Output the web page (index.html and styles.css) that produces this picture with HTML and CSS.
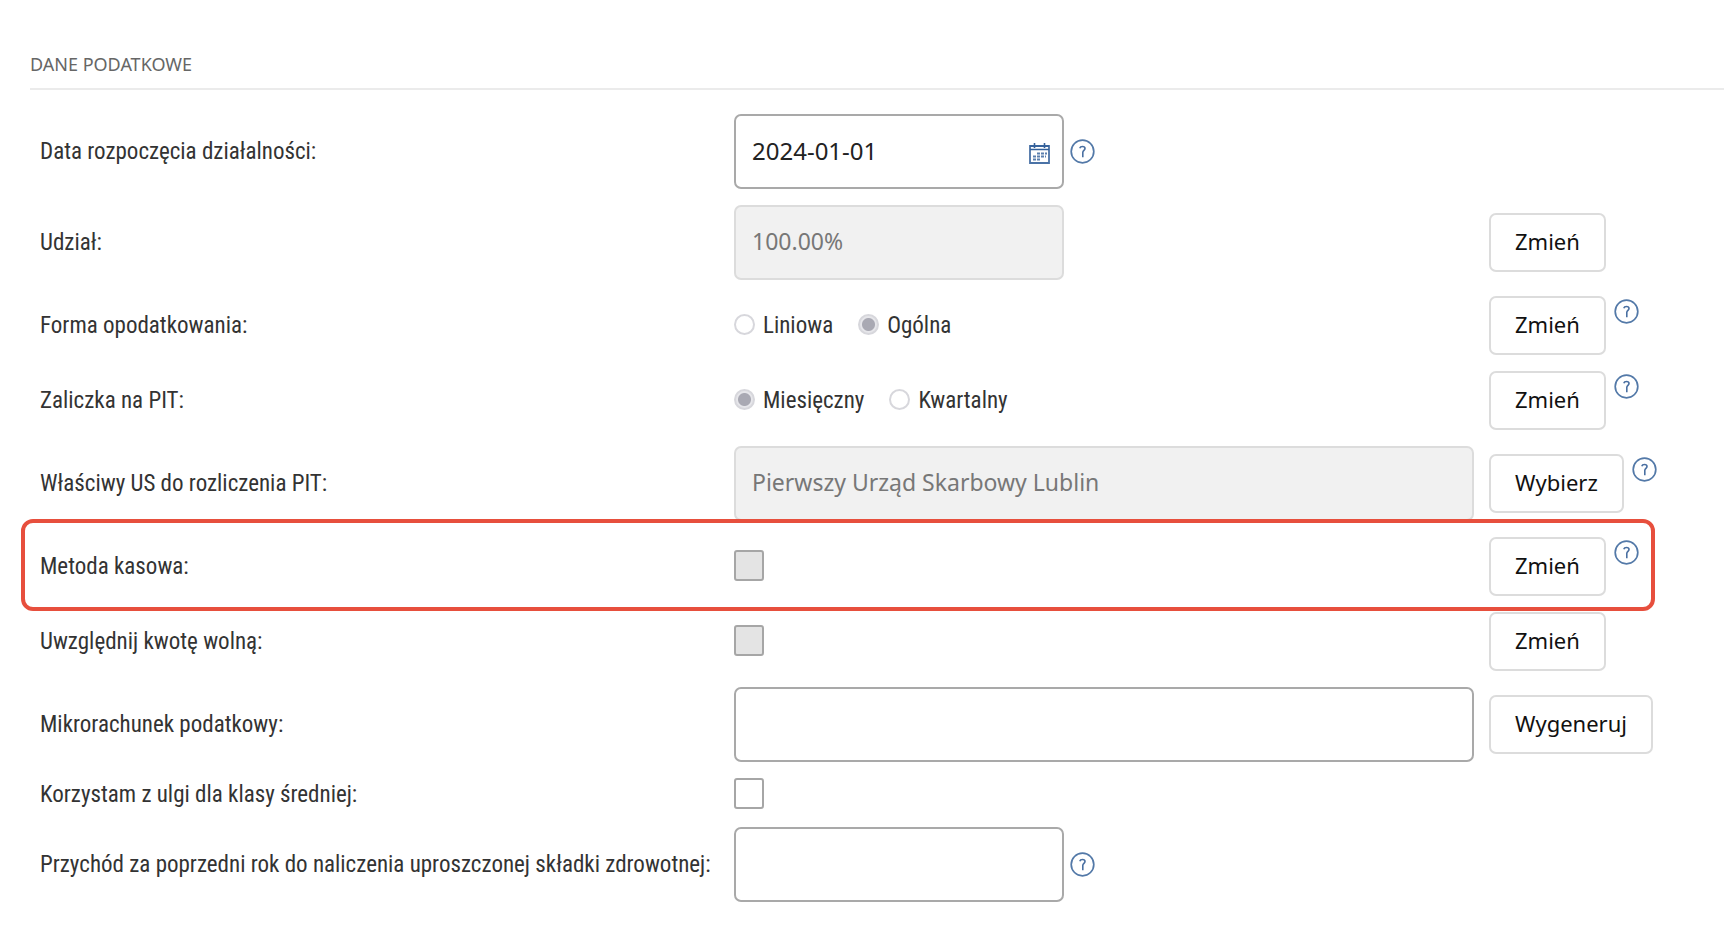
FILE: index.html
```html
<!DOCTYPE html>
<html lang="pl">
<head>
<meta charset="utf-8">
<title>Dane podatkowe</title>
<link rel="stylesheet" href="styles.css">
</head>
<body>
<svg class="sprite" aria-hidden="true">
  <symbol id="help" viewBox="0 0 25 25">
    <circle cx="12.5" cy="12.5" r="11.3" fill="none" stroke="#5379a8" stroke-width="1.7"/>
    <path d="M9.800 9.200c.3-1.200 1.300-1.700 2.700-1.700 1.600 0 2.500.7 2.500 2 0 1.800-2.200 2-2.200 4v4.800" fill="none" stroke="#4a70a2" stroke-width="1.600"/>
  </symbol>
  <symbol id="calendar" viewBox="0 0 21 21">
    <path d="M1 3h19v17H1z" fill="none" stroke="#4a72a6" stroke-width="1.800"/>
    <path d="M1 3h19M1 6.500h19" stroke="#33609a" stroke-width="1.500"/>
    <path d="M5.500 0v5M15.500 0v5" stroke="#33609a" stroke-width="1.600"/>
    <path d="M8 10.500h10M4 13.500h13M4 16.500h8" stroke="#5a7fae" stroke-width="2" stroke-dasharray="3 1"/>
  </symbol>
</svg>
<main class="panel">
  <h1 class="panel-title">Dane podatkowe</h1>
  <form class="form">
    <div class="row">
      <label class="label" for="start">Data rozpoczęcia działalności:</label>
      <div class="field">
        <div class="input input-short date">
          <input class="date-text" id="start" type="text" value="2024-01-01">
          <button class="icon-button date-button" type="button" aria-label="Kalendarz"><svg class="calendar"><use href="#calendar"/></svg></button>
        </div>
        <button class="icon-button" type="button" aria-label="Pomoc"><svg class="help"><use href="#help"/></svg></button>
      </div>
    </div>
    <div class="row">
      <label class="label" for="share">Udział:</label>
      <div class="field"><input class="input input-short" id="share" type="text" value="100.00%" disabled></div>
      <div class="actions"><button class="button" type="button">Zmień</button></div>
    </div>
    <div class="row" role="radiogroup" aria-labelledby="tax-form">
      <span class="label" id="tax-form">Forma opodatkowania:</span>
      <div class="field options">
        <label class="option"><input class="radio" type="radio" name="form" disabled>Liniowa</label>
        <label class="option"><input class="radio" type="radio" name="form" checked disabled>Ogólna</label>
      </div>
      <div class="actions"><button class="button" type="button">Zmień</button><button class="icon-button" type="button" aria-label="Pomoc"><svg class="help"><use href="#help"/></svg></button></div>
    </div>
    <div class="row" role="radiogroup" aria-labelledby="advance">
      <span class="label" id="advance">Zaliczka na PIT:</span>
      <div class="field options">
        <label class="option"><input class="radio" type="radio" name="advance" checked disabled>Miesięczny</label>
        <label class="option"><input class="radio" type="radio" name="advance" disabled>Kwartalny</label>
      </div>
      <div class="actions"><button class="button" type="button">Zmień</button><button class="icon-button" type="button" aria-label="Pomoc"><svg class="help"><use href="#help"/></svg></button></div>
    </div>
    <div class="row">
      <label class="label" for="office">Właściwy US do rozliczenia PIT:</label>
      <div class="field"><input class="input" id="office" type="text" value="Pierwszy Urząd Skarbowy Lublin" disabled></div>
      <div class="actions"><button class="button" type="button">Wybierz</button><button class="icon-button" type="button" aria-label="Pomoc"><svg class="help"><use href="#help"/></svg></button></div>
    </div>
    <div class="row row-highlight">
      <label class="label" for="cash">Metoda kasowa:</label>
      <div class="field"><input class="checkbox" id="cash" type="checkbox" disabled></div>
      <div class="actions"><button class="button" type="button">Zmień</button><button class="icon-button" type="button" aria-label="Pomoc"><svg class="help"><use href="#help"/></svg></button></div>
    </div>
    <div class="row">
      <label class="label" for="allowance">Uwzględnij kwotę wolną:</label>
      <div class="field"><input class="checkbox" id="allowance" type="checkbox" disabled></div>
      <div class="actions"><button class="button" type="button">Zmień</button></div>
    </div>
    <div class="row">
      <label class="label" for="account">Mikrorachunek podatkowy:</label>
      <div class="field"><input class="input" id="account" type="text"></div>
      <div class="actions"><button class="button" type="button">Wygeneruj</button></div>
    </div>
    <div class="row">
      <label class="label" for="relief">Korzystam z ulgi dla klasy średniej:</label>
      <div class="field"><input class="checkbox" id="relief" type="checkbox"></div>
    </div>
    <div class="row">
      <label class="label" for="income">Przychód za poprzedni rok do naliczenia uproszczonej składki zdrowotnej:</label>
      <div class="field"><input class="input input-short" id="income" type="text"><button class="icon-button" type="button" aria-label="Pomoc"><svg class="help"><use href="#help"/></svg></button></div>
    </div>
  </form>
</main>
</body>
</html>
```
FILE: styles.css
```css
* {
  box-sizing: border-box;
}

body {
  margin: 0;
  background: #fff;
  color: #333;
  font-family: "Roboto Condensed", Roboto, sans-serif;
  font-size: 23px;
  line-height: 32px;
}

.sprite {
  position: absolute;
  width: 0;
  height: 0;
}

.panel {
  padding: 52px 0 16px 30px;
}

.panel-title {
  margin: 0;
  padding-bottom: 12px;
  border-bottom: 2px solid #ebebeb;
  color: #666;
  font: 400 18px/24px "Noto Sans", sans-serif;
  text-transform: uppercase;
}

.form {
  padding: 16px 0 0 10px;
}

.row {
  position: relative;
  display: grid;
  grid-template-columns: 694fr 755fr 235fr;
  align-items: center;
  min-height: 49px;
  padding: 8px 0;
}

.row-highlight::after {
  content: "";
  position: absolute;
  inset: -10px 69px -7px -19px;
  border: 4px solid #e74f3d;
  border-radius: 12px;
  pointer-events: none;
}

.field {
  display: flex;
  align-items: center;
  gap: 6px;
  padding-right: 15px;
}

.input {
  flex: 1;
  min-width: 0;
  height: 75px;
  padding: 0 16px 3px;
  border: 2px solid #a9a9a9;
  border-radius: 7px;
  background: #fff;
  color: #222;
  font: 23px "Noto Sans", sans-serif;
}

.input:disabled {
  border-color: #dcdcdc;
  background: #f1f1f1;
  color: #777;
}

.input-short {
  flex: 0 1 330px;
}

.date {
  display: flex;
  align-items: center;
  padding-right: 12px;
}

.date-text {
  flex: 1;
  min-width: 0;
  padding: 0;
  border: 0;
  outline: 0;
  background: none;
  color: #222;
  font: 24px "Noto Sans", sans-serif;
}

.icon-button {
  display: flex;
  padding: 0;
  border: 0;
  background: none;
  cursor: pointer;
}

.date-button {
  padding-top: 6px;
}

.help {
  width: 25px;
  height: 25px;
}

.calendar {
  width: 21px;
  height: 21px;
}

.options {
  gap: 25px;
}

.option {
  display: flex;
  align-items: center;
  gap: 8px;
}

.radio {
  appearance: none;
  width: 21px;
  height: 21px;
  margin: 0 0 2px;
  border: 2px solid #d7d7dc;
  border-radius: 50%;
  background: #fff;
}

.radio:checked {
  background: radial-gradient(circle, #a9a9b3 6px, #e6e6ea 7px);
}

.checkbox {
  appearance: none;
  width: 30px;
  height: 31px;
  margin: 0 0 2px;
  border: 2px solid #a6a6a6;
  border-radius: 3px;
  background: #fff;
}

.checkbox:disabled {
  background: #e4e4e4;
}

.actions {
  display: flex;
  align-items: flex-start;
  gap: 8px;
}

.actions .icon-button {
  padding-top: 3px;
}

.button {
  height: 59px;
  padding: 0 24px 4px;
  border: 2px solid #dcdcdc;
  border-radius: 7px;
  background: #fff;
  color: #111;
  font: 22px "Noto Sans", sans-serif;
  cursor: pointer;
}
```
